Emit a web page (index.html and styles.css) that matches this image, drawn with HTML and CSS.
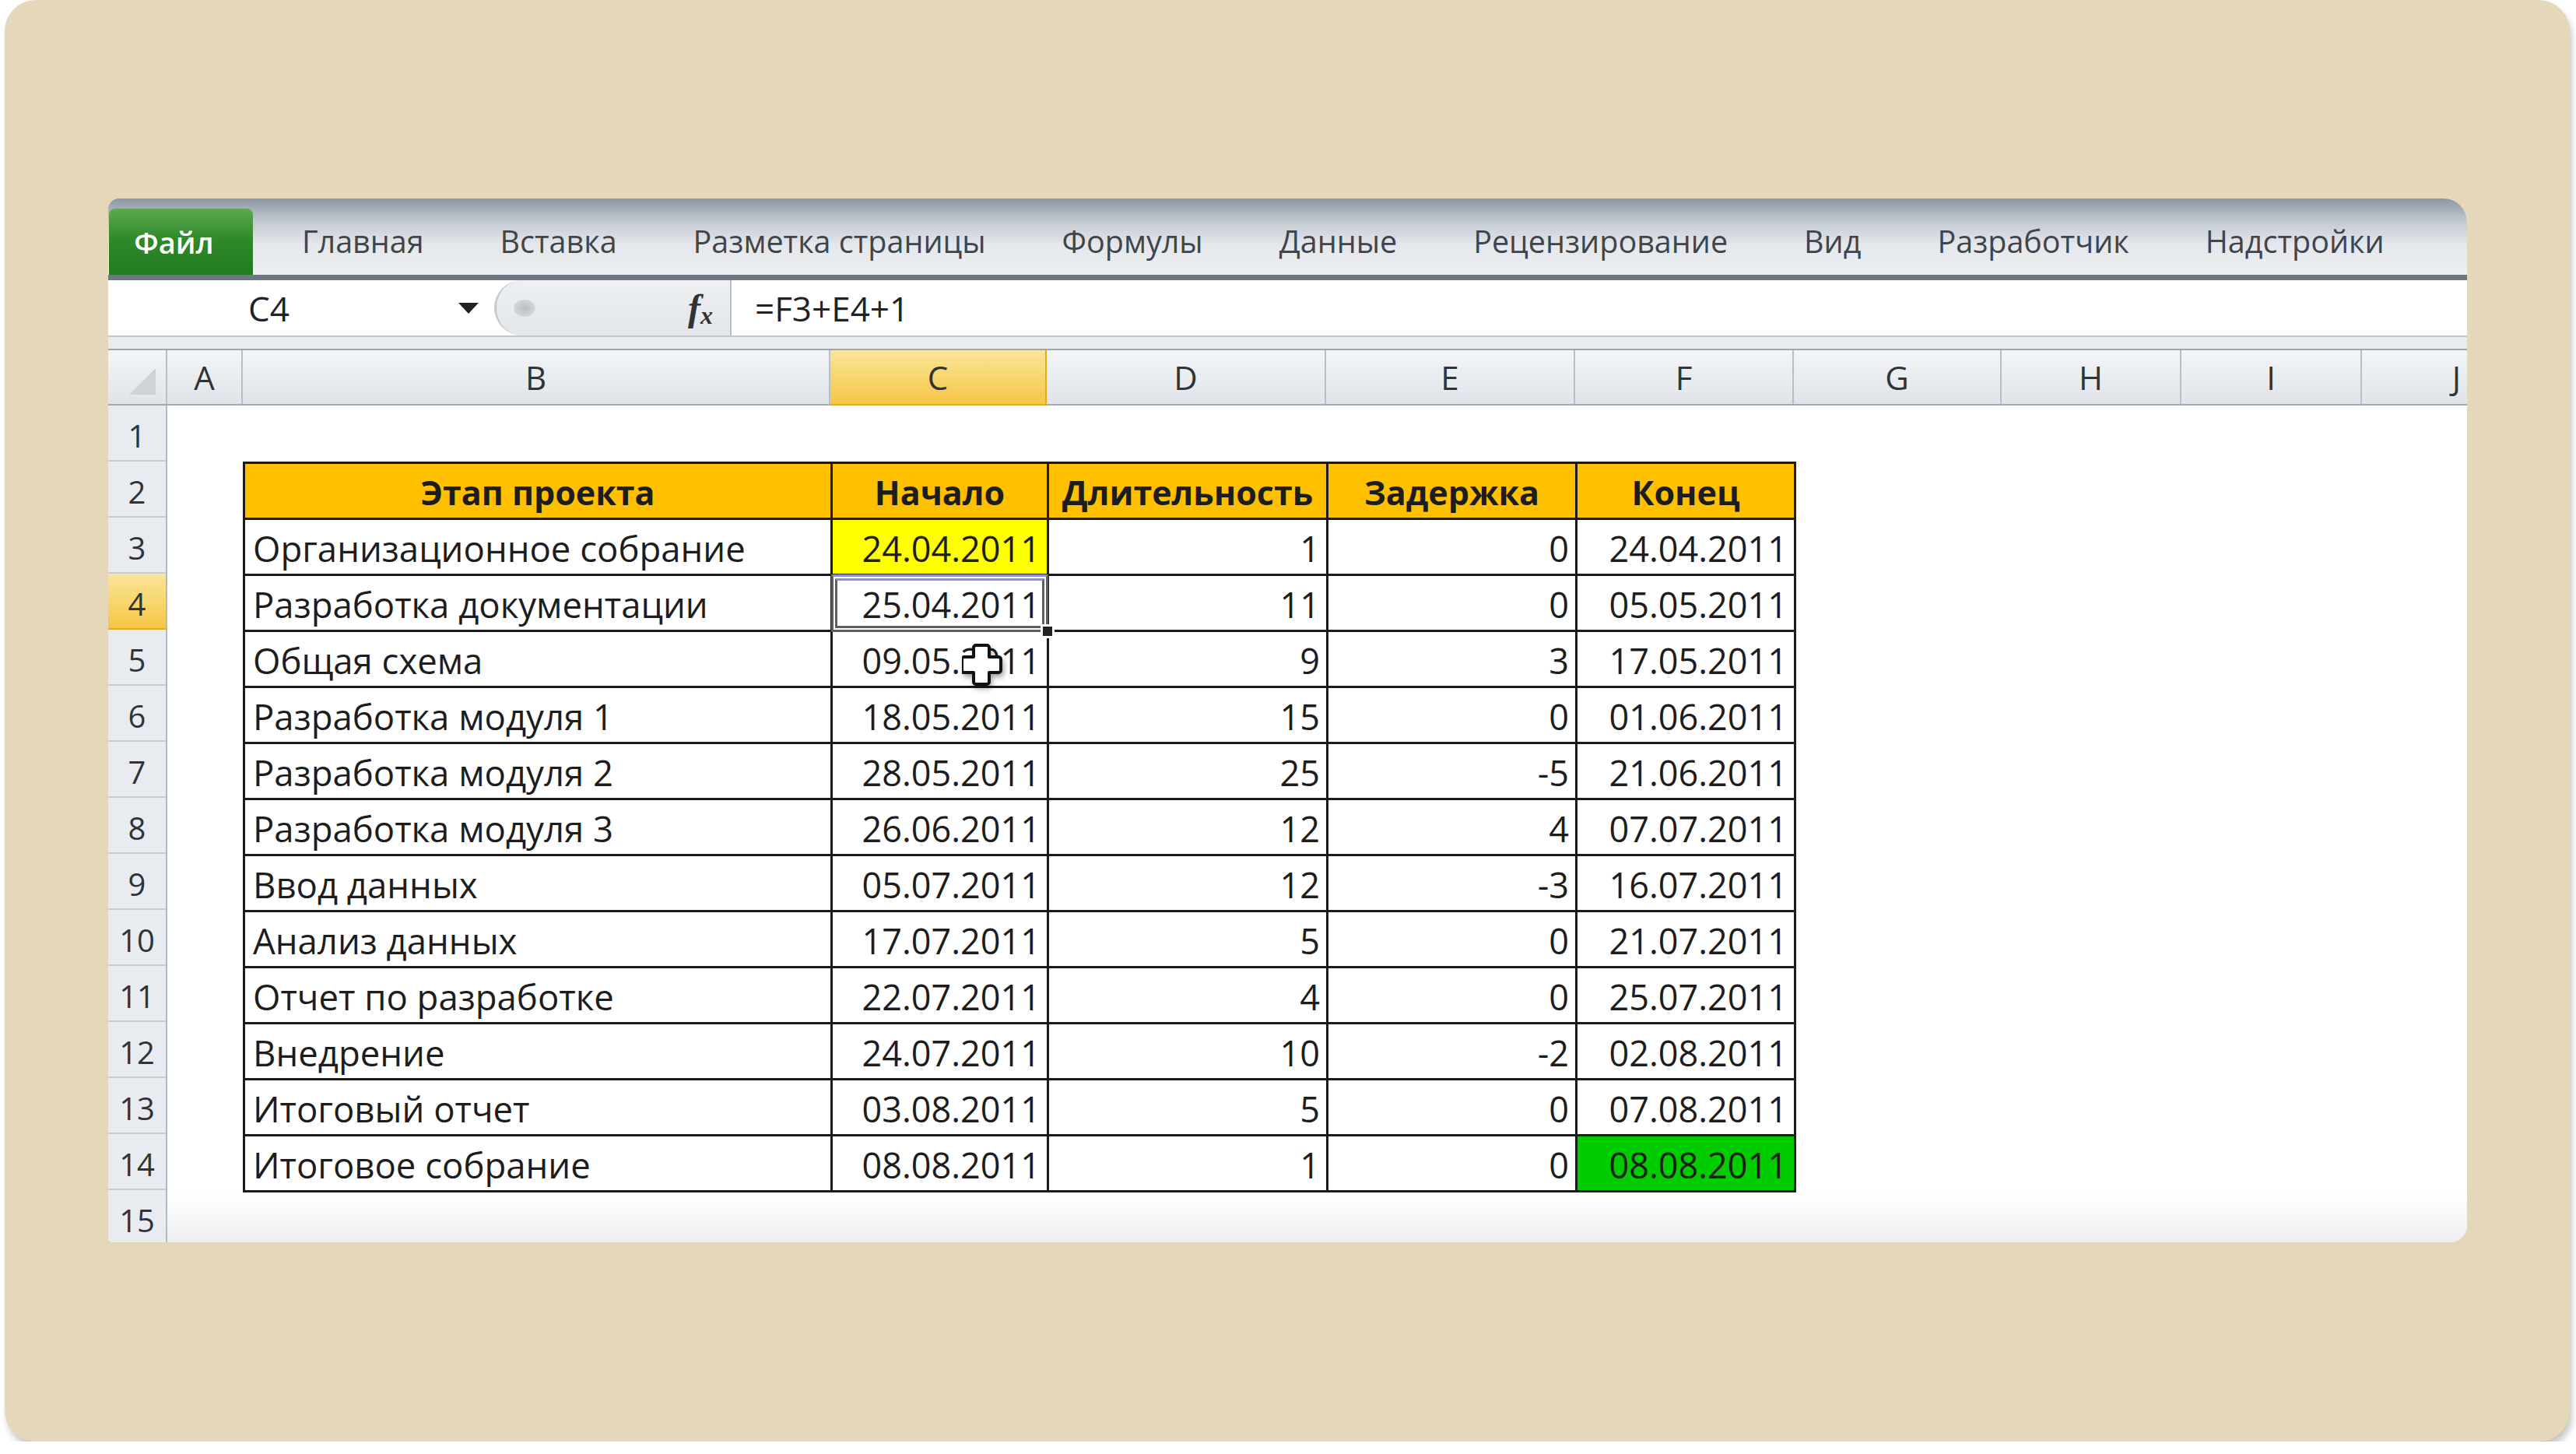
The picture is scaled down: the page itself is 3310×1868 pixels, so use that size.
FILE: index.html
```html
<!DOCTYPE html>
<html lang="ru">
<head>
    <meta charset="UTF-8">
    <title>Этапы проекта</title>
    <link rel="stylesheet" href="styles.css">
</head>
<body>
    <div class="frame">
        <div class="window">
            <div class="tabs">
                <div class="tab-file">Файл</div>
                <span>Главная</span>
                <span>Вставка</span>
                <span>Разметка страницы</span>
                <span>Формулы</span>
                <span>Данные</span>
                <span>Рецензирование</span>
                <span>Вид</span>
                <span>Разработчик</span>
                <span>Надстройки</span>
            </div>
            <div class="fbar">
                <div class="namebox"><span>C4</span><i class="arrow"></i></div>
                <div class="fbtns"><i class="knob"></i><span class="fx"><i>f</i><sub>x</sub></span></div>
                <div class="formula">=F3+E4+1</div>
            </div>
            <div class="strip"></div>
            <div class="colheads">
                <div class="corner"><i></i></div>
                <div>A</div>
                <div>B</div>
                <div class="on">C</div>
                <div>D</div>
                <div>E</div>
                <div>F</div>
                <div>G</div>
                <div>H</div>
                <div>I</div>
                <div class="last">J</div>
            </div>
            <div class="sheet">
                <div class="rowheads">
                    <div>1</div><div>2</div><div>3</div><div class="on">4</div><div>5</div>
                    <div>6</div><div>7</div><div>8</div><div>9</div><div>10</div>
                    <div>11</div><div>12</div><div>13</div><div>14</div><div>15</div>
                </div>
                <div class="cells">
                    <table class="plan">
                        <colgroup>
                            <col class="c-b"><col class="c-c"><col class="c-d"><col class="c-e"><col class="c-f">
                        </colgroup>
                        <tr class="head">
                            <td>Этап проекта</td><td>Начало</td><td>Длительность</td><td>Задержка</td><td>Конец</td>
                        </tr>
                        <tr><td>Организационное собрание</td><td class="num yellow">24.04.2011</td><td class="num">1</td><td class="num">0</td><td class="num">24.04.2011</td></tr>
                        <tr><td>Разработка документации</td><td class="num active"><span class="sel"></span><span class="handle"></span>25.04.2011</td><td class="num">11</td><td class="num">0</td><td class="num">05.05.2011</td></tr>
                        <tr><td>Общая схема</td><td class="num">09.05.2011</td><td class="num">9</td><td class="num">3</td><td class="num">17.05.2011</td></tr>
                        <tr><td>Разработка модуля 1</td><td class="num">18.05.2011</td><td class="num">15</td><td class="num">0</td><td class="num">01.06.2011</td></tr>
                        <tr><td>Разработка модуля 2</td><td class="num">28.05.2011</td><td class="num">25</td><td class="num">-5</td><td class="num">21.06.2011</td></tr>
                        <tr><td>Разработка модуля 3</td><td class="num">26.06.2011</td><td class="num">12</td><td class="num">4</td><td class="num">07.07.2011</td></tr>
                        <tr><td>Ввод данных</td><td class="num">05.07.2011</td><td class="num">12</td><td class="num">-3</td><td class="num">16.07.2011</td></tr>
                        <tr><td>Анализ данных</td><td class="num">17.07.2011</td><td class="num">5</td><td class="num">0</td><td class="num">21.07.2011</td></tr>
                        <tr><td>Отчет по разработке</td><td class="num">22.07.2011</td><td class="num">4</td><td class="num">0</td><td class="num">25.07.2011</td></tr>
                        <tr><td>Внедрение</td><td class="num">24.07.2011</td><td class="num">10</td><td class="num">-2</td><td class="num">02.08.2011</td></tr>
                        <tr><td>Итоговый отчет</td><td class="num">03.08.2011</td><td class="num">5</td><td class="num">0</td><td class="num">07.08.2011</td></tr>
                        <tr><td>Итоговое собрание</td><td class="num">08.08.2011</td><td class="num">1</td><td class="num">0</td><td class="num green">08.08.2011</td></tr>
                    </table>
                    <svg class="pointer" width="54" height="60" viewBox="0 0 54 60">
                        <path d="M18 4 h14 a3 3 0 0 1 3 3 v12 h12 a3 3 0 0 1 3 3 v14 a3 3 0 0 1 -3 3 h-12 v12 a3 3 0 0 1 -3 3 h-14 a3 3 0 0 1 -3 -3 v-12 h-12 a3 3 0 0 1 -3 -3 v-14 a3 3 0 0 1 3 -3 h12 v-12 a3 3 0 0 1 3 -3 z" fill="#fff" stroke="#111" stroke-width="4" stroke-linejoin="round"/>
                    </svg>
                </div>
            </div>
        </div>
    </div>
</body>
</html>
```

FILE: styles.css
```css
body { margin: 0; background: #fff; font-family: "Open Sans", "Noto Sans", sans-serif; }
.frame { margin-left: 6px; width: 3296px; height: 1852px; box-sizing: border-box; padding: 255px 0 0 133px; background: #e5d7b9; border-radius: 40px; box-shadow: 3px 8px 8px rgba(0, 0, 0, 0.22); }
.window { width: 3031px; height: 1341px; background: #fff; border-radius: 14px 30px 22px 6px; overflow: hidden; display: flex; flex-direction: column; }

.tabs { height: 105px; flex: none; box-sizing: border-box; display: flex; align-items: flex-end; padding-left: 1px; background: linear-gradient(#8c96a4 0%, #c3c9d1 30%, #e4e7eb 60%, #eef0f2 100%); font-size: 39.5px; color: #40454c; border-bottom: 7px solid #6c7684; }
.tabs span { margin-left: 98px; padding-bottom: 16px; }
.tab-file { width: 185px; height: 85px; box-sizing: border-box; padding: 17px 18px 0 0; margin-right: -35px; text-align: center; color: #fff; font-weight: 600; font-size: 38px; background: linear-gradient(#5ea94f, #2f8a2a 45%, #237a20); border-radius: 8px 8px 0 0; }

.fbar { height: 73px; flex: none; display: flex; background: #fff; border-bottom: 2px solid #c2c7cd; box-sizing: border-box; }
.namebox { width: 496px; display: flex; align-items: center; padding-left: 180px; box-sizing: border-box; font-size: 44px; color: #222; }
.arrow { margin-left: auto; margin-right: 20px; width: 0; height: 0; border-left: 13px solid transparent; border-right: 13px solid transparent; border-top: 14px solid #222; }
.fbtns { width: 305px; display: flex; align-items: center; justify-content: space-between; padding: 0 22px; box-sizing: border-box; background: linear-gradient(#eef0f2, #e3e6ea); border-left: 3px solid #c6cace; border-right: 2px solid #b9bec4; border-radius: 38px 0 0 38px; }
.knob { width: 28px; height: 22px; border-radius: 50%; background: radial-gradient(#b9bec4, #dfe2e6); }
.fx { font-family: "Liberation Serif", serif; font-size: 48px; font-weight: bold; color: #333; }
.fx sub { font-size: 32px; font-style: italic; vertical-align: -4px; }
.formula { flex: 1; display: flex; align-items: center; padding-left: 30px; font-size: 44px; color: #222; }

.strip { height: 15px; flex: none; background: #e9ecef; border-bottom: 2px solid #9ea5ae; }

.colheads { height: 71px; flex: none; display: grid; grid-template-columns: 76px 97px 755px 278px 359px 320px 281px 267px 231px 232px 1fr; background: linear-gradient(#f3f5f7, #e0e4e9); border-bottom: 2px solid #a3aab3; box-sizing: border-box; }
.colheads div { display: flex; align-items: center; justify-content: center; font-size: 42px; color: #303438; border-right: 2px solid #b9bfc6; }
.colheads .last { justify-content: flex-end; padding-right: 8px; border-right: none; }
.colheads .on { background: linear-gradient(#fbe599, #f5c646); border-right-color: #e2ab22; border-bottom: 2px solid #e2ab22; margin-bottom: -2px; }
.corner i { width: 0; height: 0; border-left: 34px solid transparent; border-bottom: 34px solid #cfd3d8; margin: 10px 0 0 14px; }

.sheet { flex: 1; display: grid; grid-template-columns: 76px 1fr; background: linear-gradient(#fff 94%, #eceef1); overflow: hidden; }
.rowheads { background: #e8ebef; border-right: 2px solid #b3b9c1; }
.rowheads div { height: 72px; box-sizing: border-box; display: flex; align-items: flex-end; justify-content: center; padding-bottom: 4px; font-size: 40px; color: #303438; border-bottom: 2px solid #c6ccd3; }
.rowheads .on { background: linear-gradient(#fbe599, #f5c646); border-bottom-color: #e2ab22; }

.cells { position: relative; padding: 72px 0 0 97px; }
.plan { border-collapse: collapse; table-layout: fixed; width: 1993px; font-size: 45.5px; color: #1d1d1d; }
.c-b { width: 755px; }
.c-c { width: 278px; }
.c-d { width: 359px; }
.c-e { width: 320px; }
.c-f { width: 281px; }
.plan tr { height: 72px; }
.plan td { border: 3px solid #1b1b1b; padding: 0 10px 2px 10px; vertical-align: bottom; line-height: 61px; white-space: nowrap; }
.plan .head td { background: #ffc000; font-weight: bold; font-size: 43px; text-align: center; padding: 0 2px 2px; }
.plan .num { text-align: right; padding-right: 8px; font-size: 45px; }
.plan .yellow { background: #ffff00; }
.plan .green { background: #00cc00; }
.plan .active { position: relative; }
.sel { position: absolute; left: -2px; right: -2px; top: -2px; bottom: -3px; border: 8px double #5e5e5e; border-top-color: #8e8edc; }
.handle { position: absolute; right: -10px; bottom: -11px; width: 12px; height: 12px; background: #222; border: 3px solid #fff; }
.pointer { position: absolute; left: 1021px; top: 304px; filter: drop-shadow(2px 4px 3px rgba(0, 0, 0, 0.35)); }
```
